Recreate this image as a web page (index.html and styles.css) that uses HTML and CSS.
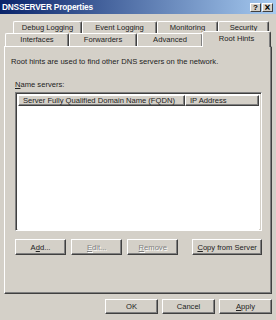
FILE: index.html
```html
<!DOCTYPE html>
<html lang="en">
<head>
    <meta charset="UTF-8">
    <title>DNSSERVER Properties</title>
    <link rel="stylesheet" href="styles.css">
</head>
<body>
    <div class="window">
        <div class="titlebar">
            <span class="title">DNSSERVER Properties</span>
            <div class="caption-buttons">
                <span class="cap-btn">?</span>
                <span class="cap-btn close">×</span>
            </div>
        </div>

        <div class="tabs">
            <div class="tab-row back">
                <div class="tab w69">Debug Logging</div>
                <div class="tab w75">Event Logging</div>
                <div class="tab w61">Monitoring</div>
                <div class="tab w51">Security</div>
            </div>
            <div class="tab-row front">
                <div class="tab w64">Interfaces</div>
                <div class="tab w68">Forwarders</div>
                <div class="tab w66">Advanced</div>
                <div class="tab w66 active">Root Hints</div>
            </div>
        </div>

        <div class="panel">
            <p class="intro">Root hints are used to find other DNS servers on the network.</p>
            <p class="label"><u>N</u>ame servers:</p>
            <div class="list">
                <div class="list-head">
                    <div class="col fqdn">Server Fully Qualified Domain Name (FQDN)</div>
                    <div class="col ip">IP Address</div>
                </div>
                <div class="list-body"></div>
            </div>
            <div class="list-buttons">
                <button class="btn">A<u>d</u>d...</button>
                <button class="btn" disabled><u>E</u>dit...</button>
                <button class="btn" disabled><u>R</u>emove</button>
                <button class="btn wide"><u>C</u>opy from Server</button>
            </div>
        </div>

        <div class="footer">
            <button class="btn">OK</button>
            <button class="btn">Cancel</button>
            <button class="btn"><u>A</u>pply</button>
        </div>
    </div>
</body>
</html>
```

FILE: styles.css
```css
body {
    margin: 0;
    background: #d4d0c8;
    font-family: 'Liberation Sans', Arial, sans-serif;
    font-size: 7.6px;
    color: #222;
}
.window {
    width: 276px;
    height: 320px;
    background: #d4d0c8;
    overflow: hidden;
}
.titlebar {
    height: 14px;
    display: flex;
    align-items: center;
    justify-content: space-between;
    padding: 0 3px 0 2px;
    box-sizing: border-box;
    background: linear-gradient(to right, #0a246a, #a6caf0);
}
.title {
    color: #fff;
    font-weight: bold;
    font-size: 8.3px;
    letter-spacing: -0.2px;
}
.caption-buttons {
    display: flex;
    gap: 1px;
}
.cap-btn {
    width: 11px;
    height: 9px;
    box-sizing: border-box;
    background: #d4d0c8;
    border: 1px solid;
    border-color: #fff #404040 #404040 #fff;
    font-size: 8px;
    font-weight: bold;
    line-height: 7px;
    text-align: center;
    color: #000;
}
.cap-btn.close {
    font-size: 10px;
}

/* tabs */
.tabs {
    margin-top: 7px;
    padding: 0 4px;
}
.tab-row {
    display: flex;
}
.tab-row.back {
    margin-left: 9px;
    height: 12px;
}
.tab-row.front {
    margin-left: 1px;
    height: 13px;
}
.tab {
    box-sizing: border-box;
    border-top: 1px solid #fff;
    border-left: 1px solid #fff;
    border-right: 1px solid #404040;
    border-radius: 2px 2px 0 0;
    box-shadow: inset -1px 0 #808080;
    text-align: center;
    line-height: 11px;
}
.w51 { width: 51px; }
.w61 { width: 61px; }
.w64 { width: 64px; }
.w66 { width: 66px; }
.w68 { width: 68px; }
.w69 { width: 69px; }
.w75 { width: 75px; }
.tab.active {
    position: relative;
    z-index: 1;
    width: 69px;
    height: 16px;
    margin: -2px -2px -1px -1px;
    background: #d4d0c8;
    line-height: 13px;
}

/* panel */
.panel {
    margin: 0 4px;
    height: 248px;
    box-sizing: border-box;
    border: 1px solid;
    border-color: #fff #404040 #404040 #fff;
    box-shadow: inset -1px -1px #808080;
    padding: 0 9px 0 10px;
}
.intro {
    margin: 10px 0 0 -4px;
    line-height: 9px;
}
.label {
    margin: 14px 0 0 0;
    line-height: 9px;
}
.list {
    margin-top: 3px;
    height: 139px;
    box-sizing: border-box;
    border: 1px solid;
    border-color: #808080 #fff #fff #808080;
    box-shadow: inset 1px 1px #404040, inset -1px -1px #d4d0c8;
    background: #fff;
    padding: 2px 2px 0 2px;
    display: flex;
    flex-direction: column;
}
.list-head {
    display: flex;
    height: 11px;
    background: #d4d0c8;
}
.col {
    box-sizing: border-box;
    border: 1px solid;
    border-color: #fff #404040 #404040 #fff;
    box-shadow: inset -1px -1px #808080;
    line-height: 9px;
    padding-left: 4px;
    white-space: nowrap;
    overflow: hidden;
}
.col.fqdn { width: 167px; }
.col.ip { flex: 1; }
.list-body {
    flex: 1;
    background: #fff;
}
.list-buttons {
    display: flex;
    gap: 5px;
    margin-top: 8px;
}

/* buttons */
.btn {
    width: 52px;
    height: 16px;
    padding: 0;
    box-sizing: border-box;
    background: #d4d0c8;
    border: 1px solid;
    border-color: #fff #404040 #404040 #fff;
    box-shadow: inset -1px -1px #808080;
    font-family: inherit;
    font-size: 7.6px;
    color: #222;
}
.btn:disabled {
    color: #808080;
    text-shadow: 1px 1px #fff;
}
.btn.wide {
    width: 71px;
    margin-left: 9px;
}
.footer {
    display: flex;
    justify-content: flex-end;
    gap: 4px;
    padding: 5px 4px 0 0;
}
.footer .btn {
    width: 53px;
    height: 15px;
}
```
